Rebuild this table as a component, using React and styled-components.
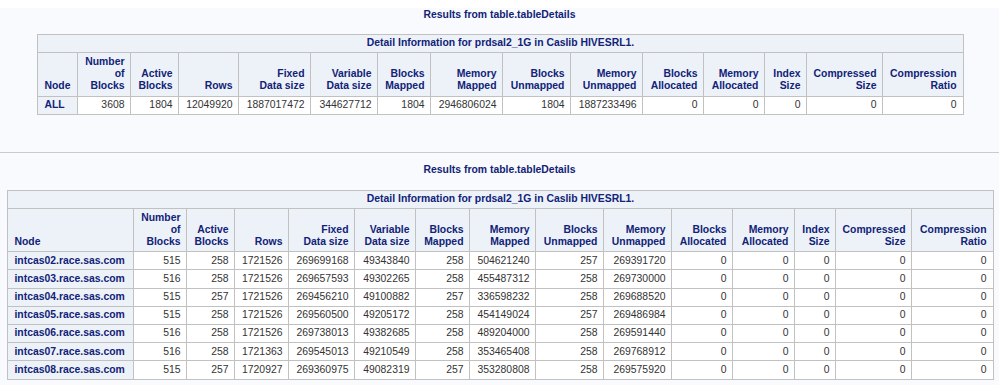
import React from "react";
import styled, { createGlobalStyle } from "styled-components";

const Global = createGlobalStyle`
  html, body { margin: 0; padding: 0; background: #ffffff; }
  body { font-family: Arial, "Liberation Sans", Helvetica, sans-serif; }
`;

const Page = styled.div`
  width: 999px;
  padding-top: 8px;
  background: #ffffff;
`;

const Section = styled.section`
  background: #f9fafd;
  padding-top: ${(p) => p.$top}px;
  padding-bottom: ${(p) => p.$bottom}px;
  border-top: ${(p) => (p.$divider ? "1px solid #cacaca" : "none")};
`;

const Title = styled.div`
  text-align: center;
  font-weight: bold;
  font-size: 10.4px;
  line-height: 14px;
  color: #112277;
  margin-bottom: ${(p) => p.$gap}px;
`;

const Table = styled.table`
  border-collapse: collapse;
  table-layout: fixed;
  margin: 0 auto;
  font-size: 10.4px;
  line-height: 12.2px;
  border: 1px solid #c1c1c1;
  transform: translateX(${(p) => p.$shift || 0}px);
`;

const CaptionCell = styled.th`
  background: #edf2f9;
  color: #112277;
  font-weight: bold;
  text-align: center;
  border: 1px solid #c1c1c1;
  padding: 0 6px;
  height: 17px;
  white-space: nowrap;
`;

const HeadCell = styled.th`
  background: #edf2f9;
  color: #112277;
  font-weight: bold;
  text-align: ${(p) => (p.$left ? "left" : "right")};
  vertical-align: bottom;
  border: 1px solid #c1c1c1;
  padding: 3px 6px 3px;
  height: 35px;
  white-space: nowrap;
`;

const RowHead = styled.th`
  background: #edf2f9;
  color: #112277;
  font-weight: bold;
  text-align: left;
  border: 1px solid #c1c1c1;
  padding: 0 6px;
  height: ${(p) => p.$h}px;
  white-space: nowrap;
`;

const DataCell = styled.td`
  background: #ffffff;
  color: #333333;
  text-align: right;
  border: 1px solid #c1c1c1;
  padding: 0 6px;
  height: ${(p) => p.$h}px;
  white-space: nowrap;
`;

const headers = [
  ["Node"],
  ["Number", "of", "Blocks"],
  ["Active", "Blocks"],
  ["Rows"],
  ["Fixed", "Data size"],
  ["Variable", "Data size"],
  ["Blocks", "Mapped"],
  ["Memory", "Mapped"],
  ["Blocks", "Unmapped"],
  ["Memory", "Unmapped"],
  ["Blocks", "Allocated"],
  ["Memory", "Allocated"],
  ["Index", "Size"],
  ["Compressed", "Size"],
  ["Compression", "Ratio"],
];

const widths1 = [40, 53, 48, 60, 72, 67, 53, 72, 68, 72, 61, 61, 42, 76, 80];
const widths2 = [126, 53, 48, 54, 66, 61, 54, 66, 68, 68, 61, 62, 41, 76, 81];

const rows1 = [
  ["ALL", 3608, 1804, 12049920, 1887017472, 344627712, 1804, 2946806024, 1804, 1887233496, 0, 0, 0, 0, 0],
];

const rows2 = [
  ["intcas02.race.sas.com", 515, 258, 1721526, 269699168, 49343840, 258, 504621240, 257, 269391720, 0, 0, 0, 0, 0],
  ["intcas03.race.sas.com", 516, 258, 1721526, 269657593, 49302265, 258, 455487312, 258, 269730000, 0, 0, 0, 0, 0],
  ["intcas04.race.sas.com", 515, 257, 1721526, 269456210, 49100882, 257, 336598232, 258, 269688520, 0, 0, 0, 0, 0],
  ["intcas05.race.sas.com", 515, 258, 1721526, 269560500, 49205172, 258, 454149024, 257, 269486984, 0, 0, 0, 0, 0],
  ["intcas06.race.sas.com", 516, 258, 1721526, 269738013, 49382685, 258, 489204000, 258, 269591440, 0, 0, 0, 0, 0],
  ["intcas07.race.sas.com", 516, 258, 1721363, 269545013, 49210549, 258, 353465408, 258, 269768912, 0, 0, 0, 0, 0],
  ["intcas08.race.sas.com", 515, 257, 1720927, 269360975, 49082319, 257, 353280808, 258, 269575920, 0, 0, 0, 0, 0],
];

function DetailTable({ widths, rows, rowH, shift }) {
  return (
    <Table $shift={shift} style={{ width: widths.reduce((a, b) => a + b, 0) }}>
      <colgroup>
        {widths.map((w, i) => (
          <col key={i} style={{ width: w }} />
        ))}
      </colgroup>
      <thead>
        <tr>
          <CaptionCell colSpan={15}>
            Detail Information for prdsal2_1G in Caslib HIVESRL1.
          </CaptionCell>
        </tr>
        <tr>
          {headers.map((h, i) => (
            <HeadCell key={i} $left={i === 0}>
              {h.map((line, j) => (
                <React.Fragment key={j}>
                  {j > 0 && <br />}
                  {line}
                </React.Fragment>
              ))}
            </HeadCell>
          ))}
        </tr>
      </thead>
      <tbody>
        {rows.map((r, i) => (
          <tr key={i}>
            <RowHead $h={rowH}>{r[0]}</RowHead>
            {r.slice(1).map((v, j) => (
              <DataCell key={j} $h={rowH}>
                {v}
              </DataCell>
            ))}
          </tr>
        ))}
      </tbody>
    </Table>
  );
}

export default function App() {
  return (
    <>
      <Global />
      <Page>
        <Section $top={0} $bottom={37}>
          <Title $gap={12}>Results from table.tableDetails</Title>
          <DetailTable widths={widths1} rows={rows1} rowH={17} shift={1} />
        </Section>
        <Section $divider $top={10} $bottom={6}>
          <Title $gap={13}>Results from table.tableDetails</Title>
          <DetailTable widths={widths2} rows={rows2} rowH={17.2} shift={1} />
        </Section>
      </Page>
    </>
  );
}
